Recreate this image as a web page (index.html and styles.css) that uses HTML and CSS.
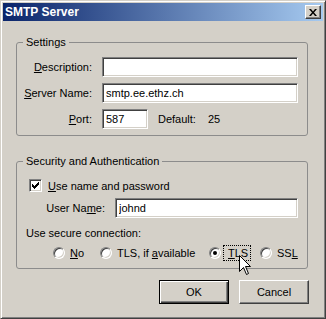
FILE: index.html
```html
<!DOCTYPE html>
<html lang="en">

<head>
    <meta charset="utf-8">
    <meta name="viewport" content="width=device-width, initial-scale=1.0">
    <title>SMTP Server</title>
    <link rel="stylesheet" href="styles.css">
</head>

<body>
    <div class="window">
        <div class="titlebar">
            <span class="title">SMTP Server</span>
            <button class="close" aria-label="Close">
                <svg width="8" height="7" viewBox="0 0 8 7">
                    <path d="M0 0h2l2 2.5l2 -2.5h2l-3 3.5l3 3.5h-2l-2 -2.5l-2 2.5h-2l3 -3.5z" fill="#000"/>
                </svg>
            </button>
        </div>

        <div class="dialog_body">
            <fieldset class="group settings">
                <legend>Settings</legend>
                <div class="form_grid">
                    <label><u>D</u>escription:</label>
                    <input type="text" class="field" value="">

                    <label><u>S</u>erver Name:</label>
                    <input type="text" class="field" value="smtp.ee.ethz.ch">

                    <label><u>P</u>ort:</label>
                    <div class="port_row">
                        <input type="text" class="field port" value="587">
                        <span class="default_label">Default:</span>
                        <span class="default_value">25</span>
                    </div>
                </div>
            </fieldset>

            <fieldset class="group security">
                <legend>Security and Authentication</legend>

                <div class="check_row">
                    <span class="checkbox">
                        <svg width="7" height="7" viewBox="0 0 7 7">
                            <path d="M0 2h1v1h1v1h1v-1h1v-1h1v-1h1v-1h1v3h-1v1h-1v1h-1v1h-1v1h-1v-1h-1v-1h-1z" fill="#000"/>
                        </svg>
                    </span>
                    <span><u>U</u>se name and password</span>
                </div>

                <div class="user_row">
                    <label>User Na<u>m</u>e:</label>
                    <input type="text" class="field" value="johnd">
                </div>

                <div class="secure_label">Use secure connection:</div>

                <div class="radio_row">
                    <span class="option opt_no"><span class="radio"></span><span class="radio_text"><u>N</u>o</span></span>
                    <span class="option opt_tls_avail"><span class="radio"></span><span class="radio_text">TLS, if <u>a</u>vailable</span></span>
                    <span class="option opt_tls"><span class="radio checked"></span><span class="radio_text focus"><u>T</u>LS</span></span>
                    <span class="option opt_ssl"><span class="radio"></span><span class="radio_text">SS<u>L</u></span></span>
                </div>
            </fieldset>

            <div class="buttons">
                <button class="btn default">OK</button>
                <button class="btn">Cancel</button>
            </div>
        </div>

        <!-- mouse pointer over the TLS option -->
        <svg class="cursor" width="13" height="20" viewBox="0 0 13 20">
            <path d="M0.5 0.5V16.5L4.5 12.5L7.5 19.5L9.5 18.5L6.5 11.5H11.5Z" fill="#fff" stroke="#000" stroke-width="1"/>
        </svg>
    </div>
</body>

</html>
```

FILE: styles.css
```css
/* dialog in classic windows look */

* {
    box-sizing: border-box;
}

body {
    margin: 0;
    background-color: #d4d0c8;
    font-family: "Liberation Sans", Arial, sans-serif;
    font-size: 11px;
    color: #000;
}

.window {
    position: relative;
    width: 326px;
    height: 319px;
    background-color: #d4d0c8;
    border: 1px solid;
    border-color: #d4d0c8 #404040 #404040 #d4d0c8;
    box-shadow: inset 1px 1px #fff, inset -1px -1px #808080;
    padding: 2px;
}

/* ------- title bar ------- */

.titlebar {
    display: flex;
    align-items: center;
    justify-content: space-between;
    height: 18px;
    padding: 0 2px;
    background: linear-gradient(to right, #0a246a, #a6caf0);
}

.title {
    color: #fff;
    font-weight: bold;
    font-size: 12px;
    line-height: 18px;
}

.close {
    display: flex;
    align-items: center;
    justify-content: center;
    width: 16px;
    height: 14px;
    padding: 0;
    background-color: #d4d0c8;
    border: 1px solid;
    border-color: #fff #404040 #404040 #fff;
    box-shadow: inset -1px -1px #808080;
}

/* ------- content ------- */

.dialog_body {
    padding: 14px 15px 0 13px;
}

.group {
    margin: 0;
    width: 292px;
    border: 1px solid #8c8c8c;
    border-radius: 3px;
    min-inline-size: 0;
}

.group legend {
    margin-left: 6px;
    padding: 0 3px;
    line-height: 14px;
}

.settings {
    padding: 8px 8px 6px 0;
}

.security {
    margin-top: 18px;
    padding: 11px 8px 7px 0;
}

.form_grid {
    display: grid;
    grid-template-columns: 75px 196px;
    column-gap: 10px;
    row-gap: 6px;
    align-items: center;
}

.form_grid label {
    justify-self: end;
}

.field {
    height: 20px;
    width: 100%;
    margin: 0;
    padding: 0 3px;
    font-family: "Liberation Sans", Arial, sans-serif;
    font-size: 11px;
    color: #000;
    background-color: #fff;
    border: 1px solid;
    border-color: #808080 #fff #fff #808080;
    box-shadow: inset 1px 1px #404040, inset -1px -1px #d4d0c8;
    outline: none;
}

.port_row {
    display: flex;
    align-items: center;
}

.field.port {
    width: 46px;
}

.default_label {
    margin-left: 10px;
}

.default_value {
    margin-left: 12px;
}

.check_row {
    display: flex;
    align-items: center;
    height: 13px;
    padding-left: 12px;
}

.checkbox {
    display: flex;
    align-items: center;
    justify-content: center;
    width: 13px;
    height: 13px;
    margin-right: 6px;
    background-color: #fff;
    border: 1px solid;
    border-color: #808080 #fff #fff #808080;
    box-shadow: inset 1px 1px #404040, inset -1px -1px #d4d0c8;
}

.user_row {
    display: grid;
    grid-template-columns: 88px 183px;
    column-gap: 10px;
    align-items: center;
    margin-top: 6px;
}

.user_row label {
    justify-self: end;
}

.secure_label {
    margin-top: 9px;
    padding-left: 9px;
    line-height: 13px;
}

.radio_row {
    display: flex;
    align-items: center;
    height: 16px;
    margin-top: 5px;
    padding-left: 36px;
}

.option {
    display: flex;
    align-items: center;
}

.opt_no {
    width: 47px;
}

.opt_tls_avail {
    width: 109px;
}

.opt_tls {
    width: 51px;
}

.radio {
    width: 12px;
    height: 12px;
    border-radius: 50%;
    background-color: #fff;
    border: 1px solid;
    border-color: #808080 #fff #fff #808080;
    box-shadow: inset 1px 1px #404040, inset -1px -1px #d4d0c8;
    display: flex;
    align-items: center;
    justify-content: center;
}

.radio.checked::after {
    content: "";
    width: 4px;
    height: 4px;
    border-radius: 50%;
    background-color: #000;
}

.radio_text {
    margin-left: 5px;
}

.radio_text.focus {
    margin-left: 2px;
    padding: 1px 2px 1px 4px;
    border: 1px dotted #000;
    line-height: 12px;
}

/* ------- buttons ------- */

.buttons {
    display: flex;
    justify-content: flex-end;
    gap: 10px;
    margin-top: 11px;
    margin-right: -1px;
}

.btn {
    width: 70px;
    height: 24px;
    padding: 0;
    font-family: "Liberation Sans", Arial, sans-serif;
    font-size: 11px;
    color: #000;
    background-color: #d4d0c8;
    border: 1px solid;
    border-color: #fff #404040 #404040 #fff;
    box-shadow: inset -1px -1px #808080;
}

.btn.default {
    border: 1px solid #000;
    box-shadow: inset 1px 1px #fff, inset -1px -1px #404040, inset -2px -2px #808080;
}

.cursor {
    position: absolute;
    left: 238px;
    top: 254px;
}
```
